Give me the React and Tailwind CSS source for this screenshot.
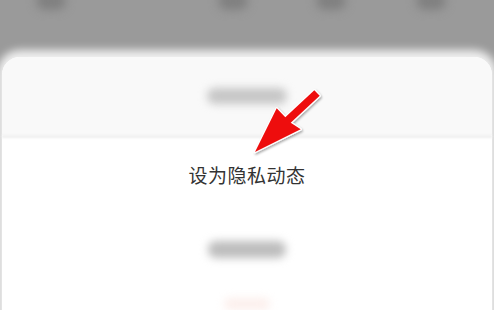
export default function App() {
  return (
    <div className="relative w-[494px] h-[310px] overflow-hidden bg-[#9a9a9a] font-['Noto_Sans_CJK_SC','Noto_Sans',sans-serif]">
      <div className="h-[57px] flex items-start">
        <div className="ml-[36px] -mt-[8px] w-[30px] h-[18px] rounded-full bg-[#808080] blur-[5px]" />
        <div className="ml-[152px] -mt-[8px] w-[30px] h-[18px] rounded-full bg-[#808080] blur-[5px]" />
        <div className="ml-[68px] -mt-[8px] w-[30px] h-[18px] rounded-full bg-[#808080] blur-[5px]" />
        <div className="ml-[70px] -mt-[8px] w-[30px] h-[18px] rounded-full bg-[#808080] blur-[5px]" />
      </div>
      <div className="mx-[2px] rounded-t-[18px] bg-white shadow-[0_-2px_9px_5px_rgba(255,255,255,0.85)] flex flex-col">
        <div className="h-[78px] rounded-t-[18px] bg-[#f9f9f9] flex items-center justify-center">
          <div className="w-[80px] h-[16px] rounded-[8px] bg-[#c6c6c6] blur-[4px]" />
        </div>
        <div className="h-[3px] bg-[#efefef] blur-[1px]" />
        <div className="h-[72px] flex items-center justify-center">
          <span className="text-[19px] leading-none text-[#333333] tracking-[0.5px]">设为隐私动态</span>
        </div>
        <div className="h-[78px] flex items-center justify-center">
          <div className="w-[78px] h-[17px] rounded-[8px] bg-[#bdbdbd] blur-[4px]" />
        </div>
        <div className="h-[40px] flex justify-center">
          <div className="mt-[10px] w-[46px] h-[12px] rounded-full bg-[#fcefec] blur-[4px]" />
        </div>
      </div>
      <svg className="absolute inset-0 pointer-events-none" width="494" height="310" viewBox="0 0 494 310">
        <defs>
          <filter id="sh" x="-20%" y="-20%" width="140%" height="140%">
            <feDropShadow dx="1" dy="1.5" stdDeviation="1.2" floodColor="#000" floodOpacity="0.35" />
          </filter>
        </defs>
        <polygon
          points="314.3,90.2 285.3,117.2 276.7,108.3 255,152 300.7,129.3 290.7,122.8 319.7,95.8"
          fill="#ee0f0f"
          stroke="#ffffff"
          strokeWidth="2.5"
          strokeLinejoin="round"
          paintOrder="stroke"
          filter="url(#sh)"
        />
      </svg>
    </div>
  );
}
